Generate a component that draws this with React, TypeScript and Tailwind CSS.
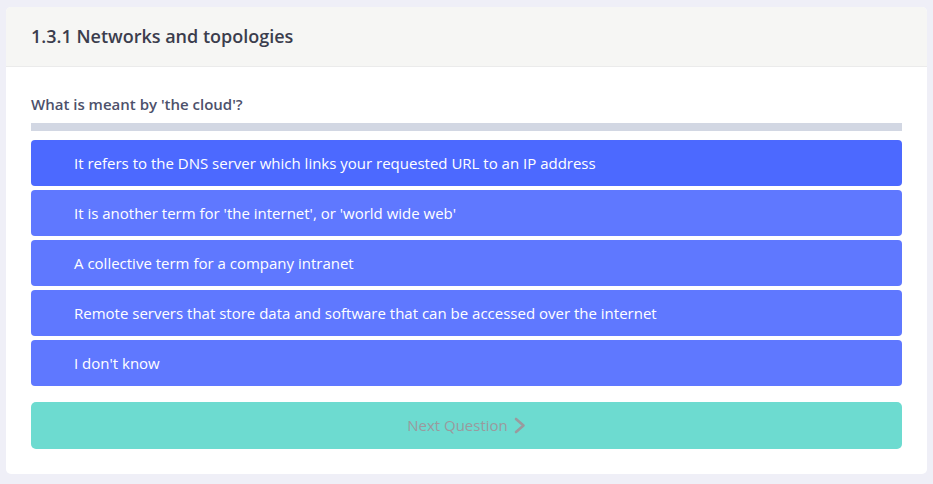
const answers = [
  'It refers to the DNS server which links your requested URL to an IP address',
  "It is another term for 'the internet', or 'world wide web'",
  'A collective term for a company intranet',
  'Remote servers that store data and software that can be accessed over the internet',
  "I don't know"
]

const App = () => {
  return (
    <div className="min-h-[484px] bg-[#efeff7] px-[6px] pt-[7px] pb-[10px] font-['Open_Sans',sans-serif]">
      <div className="rounded-[5px] bg-white overflow-hidden">
        <div className="h-[60px] flex items-center px-[25px] bg-[#f6f6f4] border-b border-[#ebebeb]">
          <h1 className="text-[18px] font-semibold text-[#3b3d4d]">1.3.1 Networks and topologies</h1>
        </div>
        <div className="px-[25px] pt-[27px] pb-[25px]">
          <h2 className="text-[15px] font-semibold text-[#4d516b] leading-[20px]">What is meant by 'the cloud'?</h2>
          <div className="mt-[9px] h-[8px] bg-[#d2d7e3]" />
          <div className="mt-[9px] flex flex-col gap-[4px]">
            {answers.map((a, i) => (
              <button
                key={a}
                className={
                  'h-[46px] w-full flex items-center pl-[43px] rounded-[4px] text-left text-[15px] text-white ' +
                  (i === 0 ? 'bg-[#4c69ff]' : 'bg-[#5f78ff]')
                }
              >
                {a}
              </button>
            ))}
          </div>
          <button className="mt-[16px] h-[47px] w-full flex items-center justify-center gap-[6px] rounded-[5px] bg-[#6ddbd0] text-[15px] text-[#9a9a9e]">
            Next Question
            <svg width="12" height="17" viewBox="0 0 12 17" fill="none" stroke="currentColor" strokeWidth="2.6" strokeLinecap="round" strokeLinejoin="round">
              <polyline points="2,2 9.5,8.5 2,15" />
            </svg>
          </button>
        </div>
      </div>
    </div>
  )
}

export default App
